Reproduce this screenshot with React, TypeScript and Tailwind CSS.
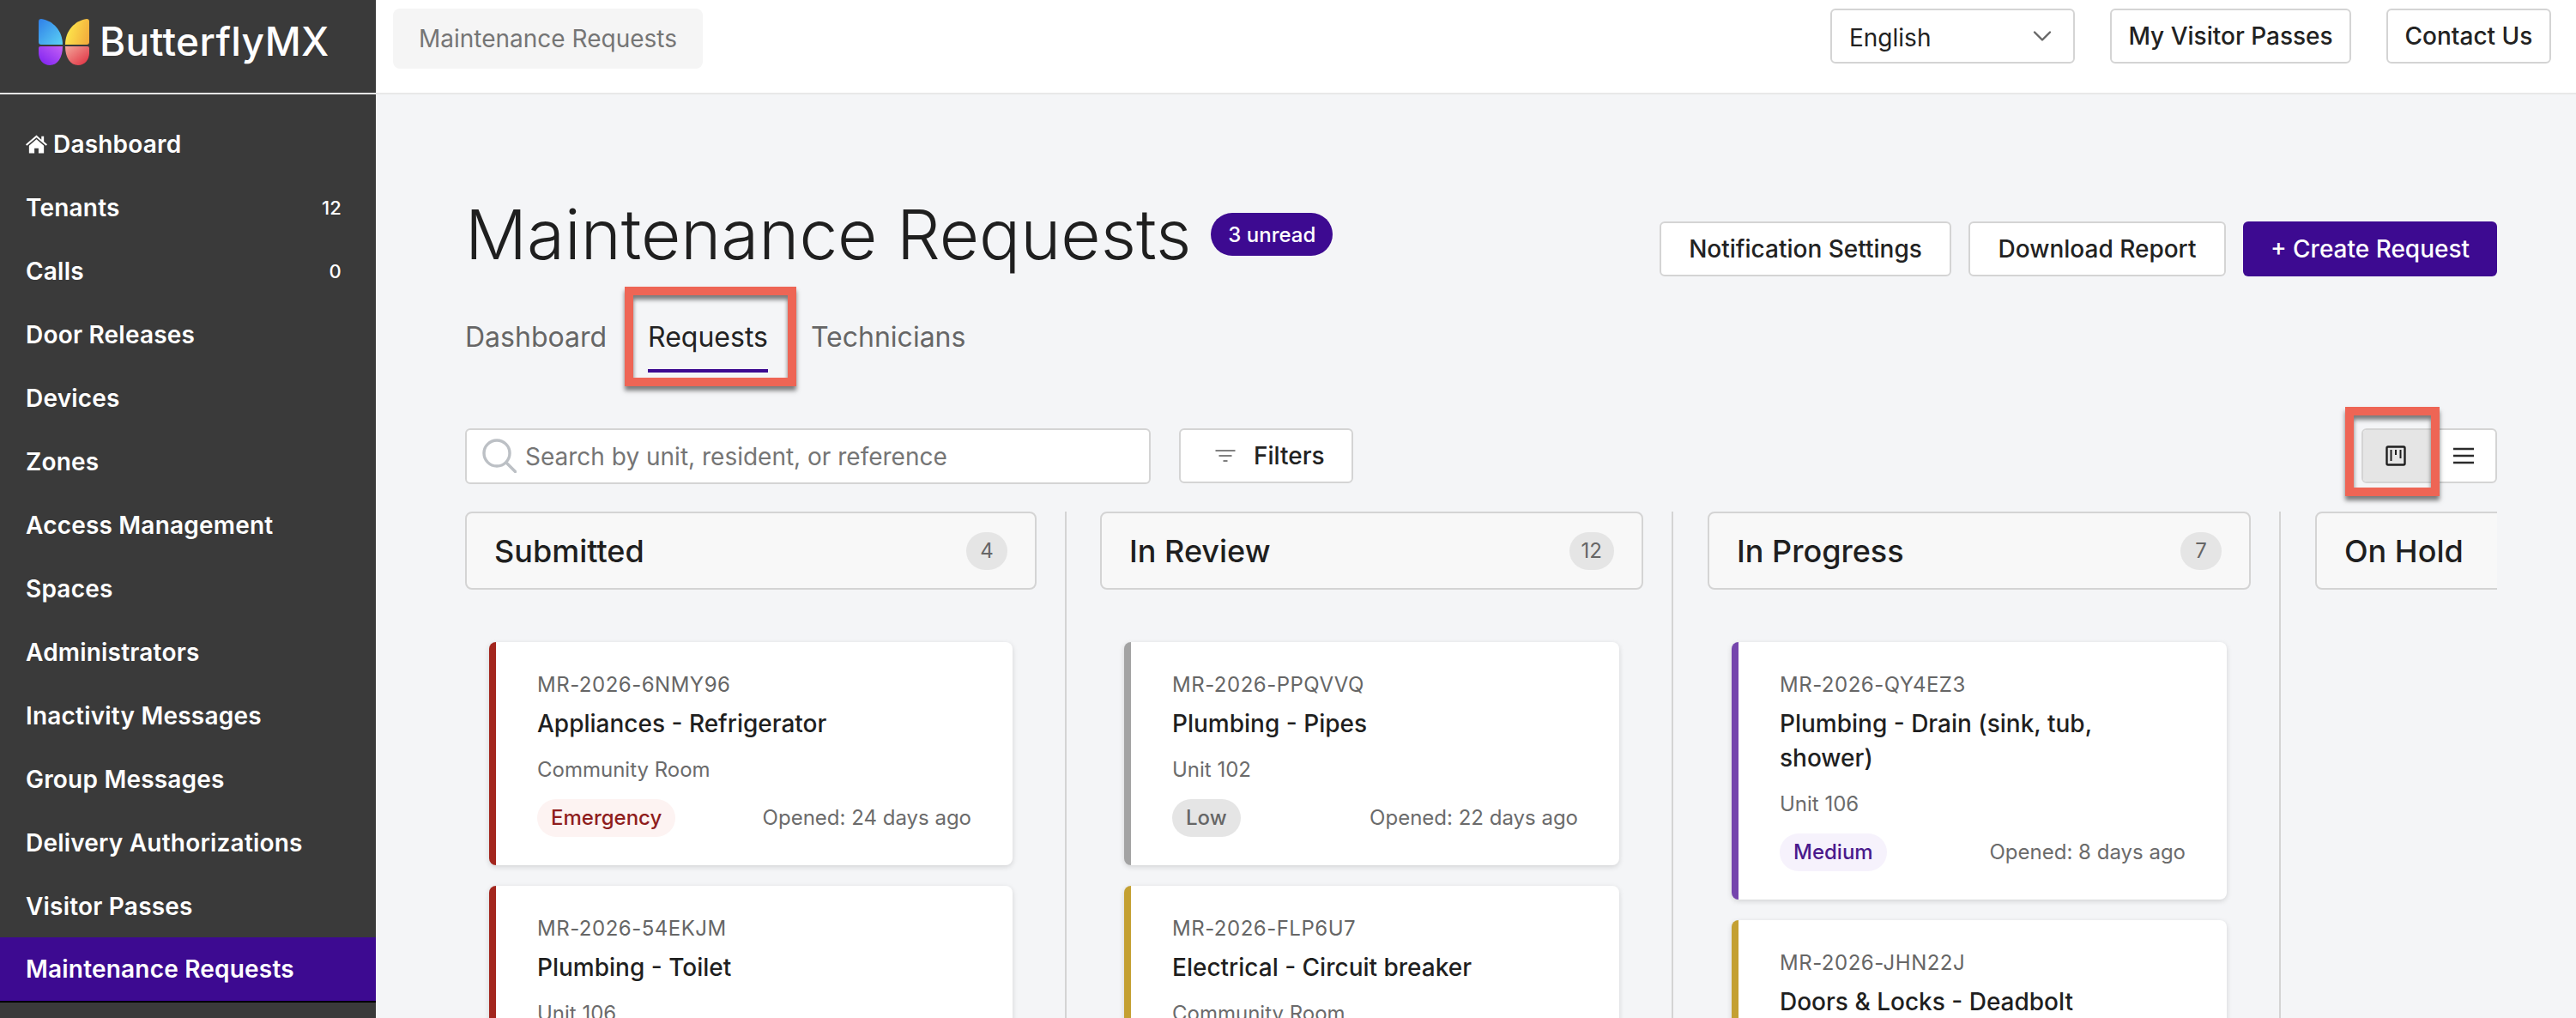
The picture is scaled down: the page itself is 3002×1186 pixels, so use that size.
import React from "react";
import { ChevronDown } from "lucide-react";

const nav: [string, string?][] = [
  ["Tenants", "12"], ["Calls", "0"], ["Door Releases"], ["Devices"], ["Zones"], ["Access Management"], ["Spaces"],
  ["Administrators"], ["Inactivity Messages"], ["Group Messages"], ["Delivery Authorizations"], ["Visitor Passes"],
];

function Logo() {
  return (
    <svg width="59" height="54" viewBox="0 0 59 54" className="shrink-0">
      <defs>
        <linearGradient id="lg1" x1="0" y1="0" x2="1" y2="1"><stop offset="0" stopColor="#2f7fe8" /><stop offset="1" stopColor="#5cd2f5" /></linearGradient>
        <linearGradient id="lg2" x1="0" y1="0.6" x2="1" y2="0.9"><stop offset="0" stopColor="#fde74c" /><stop offset="1" stopColor="#f2a93b" /></linearGradient>
        <linearGradient id="lg3" x1="0" y1="1" x2="1" y2="0"><stop offset="0" stopColor="#7a1ff0" /><stop offset="1" stopColor="#c561f5" /></linearGradient>
        <linearGradient id="lg4" x1="0" y1="0" x2="1" y2="1"><stop offset="0" stopColor="#f3a79a" /><stop offset="1" stopColor="#e02c3f" /></linearGradient>
      </defs>
      <path d="M0 3Q0 0 3 0C17 2 28 14 28 30H3Q0 30 0 27Z" fill="url(#lg1)" />
      <path d="M59 3Q59 0 56 0C42 2 31 14 31 30H56Q59 30 59 27Z" fill="url(#lg2)" />
      <path d="M0 34Q0 32 2 32H28C28 45 22 54 13 54C5 54 0 47 0 40Z" fill="url(#lg3)" />
      <path d="M59 34Q59 32 57 32H31C31 45 37 54 46 54C54 54 59 47 59 40Z" fill="url(#lg4)" />
    </svg>
  );
}

function Home() {
  return (
    <svg width="25" height="22" viewBox="0 0 26 22" className="shrink-0" fill="#fff">
      <path d="M13 0 0 11.2l1.4 1.6L13 2.9l11.6 9.9 1.4-1.6-4-3.4V1.5h-3v4.1z" />
      <path d="M13 5 4 12.7V22h6.5v-6h5v6H22v-9.3z" />
    </svg>
  );
}

function Kanban() {
  return (
    <svg width="24" height="24" viewBox="0 0 24 24" fill="none" stroke="#1f1f1f" strokeWidth="2.4">
      <rect x="1.5" y="1.5" width="21" height="21" rx="1.5" />
      <path d="M6.5 5v13M12 5v6M17.5 5v10" strokeWidth="2" />
    </svg>
  );
}

function FilterIcon() {
  return (
    <svg width="24" height="16" viewBox="0 0 24 16" fill="none" stroke="#808080" strokeWidth="2" className="shrink-0">
      <path d="M0.5 2h23M4.5 8h15M9.5 14h5" />
    </svg>
  );
}

function SearchIcon() {
  return (
    <svg width="40" height="40" viewBox="0 0 40 40" fill="none" stroke="#bcc0c5" strokeWidth="3.4" strokeLinecap="round" className="shrink-0">
      <circle cx="17" cy="17" r="15" />
      <path d="M28 28 38.5 38.5" />
    </svg>
  );
}

function Lines() {
  return (
    <svg width="24" height="20" viewBox="0 0 24 20" fill="none" stroke="#2b2b2b" strokeWidth="2.5">
      <path d="M0 2h24M0 10h24M0 18h24" />
    </svg>
  );
}

function Annot({ className }: { className: string }) {
  return <div className={`pointer-events-none absolute border-[10px] border-[#ee6555] shadow-[0_5px_5px_rgba(0,0,0,0.5),inset_0_5px_5px_rgba(0,0,0,0.5)] ${className}`} />;
}

type C = { id: string; title: string; loc: string; pr: string; opened?: string; bar: string; badge: string };

const Card = ({ c }: { c: C }) => (
  <div className={`shrink-0 rounded-lg border-l-8 bg-white pl-12 pr-12 pt-[34px] pb-[33px] shadow-[0_2px_6px_rgba(0,0,0,0.14)] ${c.bar}`}>
    <div className="text-[24px] leading-[32px] tracking-[0.5px] text-[#666]">{c.id}</div>
    <div className="mt-[9px] text-[28px] leading-[40px] font-medium text-[#1f1f1f]">{c.title}</div>
    <div className="mt-[18px] text-[24px] leading-[32px] text-[#6b6b6b]">{c.loc}</div>
    <div className="mt-[18px] flex items-center justify-between">
      <span className={`h-11 rounded-full px-4 text-[24px] leading-[44px] font-medium ${c.badge}`}>{c.pr}</span>
      {c.opened && <span className="text-[24px] leading-[32px] text-[#6b6b6b]">{c.opened}</span>}
    </div>
  </div>
);

function Column({ title, count, cards, className }: { title: string; count?: string; cards: C[]; className: string }) {
  return (
    <div className={`flex shrink-0 flex-col ${className}`}>
      <div className="flex h-[91px] shrink-0 items-center justify-between rounded-lg border-2 border-[#d4d4d4] bg-[#f8f8f8] pl-8 pr-8">
        <span className="text-[36px] font-medium text-[#1f1f1f]">{title}</span>
        {count && (
          <span className="flex h-11 min-w-12 items-center justify-center rounded-full bg-[#e5e5e5] px-[14px] text-[24px] text-[#666]">{count}</span>
        )}
      </div>
      <div className="mt-[61px] flex shrink-0 flex-col gap-6 px-7">
        {cards.map((c) => <Card key={c.id} c={c} />)}
      </div>
    </div>
  );
}

const red = "border-[#a3261e]";
const gold = "border-[#c4a032]";
const emergency = "bg-[#fdf3f2] text-[#8f1d1d]";

export default function App() {
  return (
    <div className="flex h-[1186px] w-[3002px] overflow-hidden bg-[#f4f5f7] font-['Inter',sans-serif]">
      <aside className="flex w-[438px] shrink-0 flex-col bg-[#3a3a3a] text-white">
        <div className="flex h-[110px] shrink-0 items-start gap-3 border-b-[2px] border-[#e5e5e5] pt-[22px] pl-[45px]">
          <Logo />
          <span className="text-[46px] leading-[52px] font-medium tracking-[0.4px]">ButterflyMX</span>
        </div>
        <nav className="mt-[20px] flex flex-col text-[28px] font-semibold tracking-[0.2px]">
          <a className="flex h-[74px] items-center gap-[7px] pt-[2px] pl-[30px]"><Home /><span>Dashboard</span></a>
          {nav.map(([n, b]) => (
            <a key={n} className="flex h-[74px] items-center justify-between pt-[2px] pl-[30px] pr-10">
              <span>{n}</span>
              {b && <span className="text-[22px] font-medium">{b}</span>}
            </a>
          ))}
          <a className="flex h-[76px] items-center border-b-2 border-black bg-[#3d0a91] pl-[30px]">Maintenance Requests</a>
        </nav>
      </aside>

      <div className="flex min-w-0 flex-1 flex-col">
        <header className="flex h-[110px] shrink-0 items-start justify-between border-b-2 border-[#e8e8e8] bg-white pl-5 pr-[29px] pt-[10px]">
          <div className="flex h-[70px] items-center rounded-lg bg-[#f5f5f5] px-[30px] text-[28px] text-[#757575]">Maintenance Requests</div>
          <div className="flex gap-[41px] text-[28px] text-[#222]">
            <div className="flex h-[64px] w-[285px] items-center justify-between rounded-md border-2 border-[#d4d4d4] pl-[20px] pr-[18px]">
              <span className="pt-[4px]">English</span><ChevronDown size={36} strokeWidth={1.6} color="#666" />
            </div>
            <div className="flex h-[64px] w-[281px] items-center justify-center rounded-md border-2 border-[#d4d4d4] font-medium">My Visitor Passes</div>
            <div className="flex h-[64px] w-[192px] items-center justify-center rounded-md border-2 border-[#d4d4d4] font-medium">Contact Us</div>
          </div>
        </header>

        <main className="relative flex min-h-0 flex-1 flex-col pl-[104px] pr-[92px]">
          <div className="mt-[113px] flex h-[100px] shrink-0 items-start justify-between">
            <div className="flex items-center gap-[23px]">
              <h1 className="text-[80px] leading-[100px] font-light text-[#1f1f1f]">Maintenance Requests</h1>
              <span className="flex h-[50px] items-center rounded-full bg-[#3d0a91] px-5 pt-[2px] text-[24px] font-medium text-white">3 unread</span>
            </div>
            <div className="mt-[35px] flex gap-5 text-[28px] font-medium">
              <button className="h-[64px] w-[340px] rounded-md border-2 border-[#d4d4d4] bg-white text-[#222]">Notification Settings</button>
              <button className="h-[64px] w-[300px] rounded-md border-2 border-[#d4d4d4] bg-white text-[#222]">Download Report</button>
              <button className="h-[64px] w-[296px] rounded-md bg-[#3d0a91] text-white">+ Create Request</button>
            </div>
          </div>

          <div className="mt-[42px] flex h-[69px] shrink-0 gap-[48px] text-[32px] text-[#666]">
            <div className="pt-[4px] leading-[48px]">Dashboard</div>
            <div className="h-[69px] border-b-4 border-[#3d0a91] pt-[4px] leading-[48px] text-[#222]">Requests</div>
            <div className="ml-[2px] pt-[4px] leading-[48px]">Technicians</div>
          </div>

          <div className="mt-[65px] flex h-[64px] shrink-0 items-center">
            <div className="flex h-[65px] w-[799px] items-center gap-[10px] rounded-md border-2 border-[#d4d4d4] bg-white pl-[18px] text-[28px] text-[#757575]">
              <SearchIcon />
              <span className="pt-[2px]">Search by unit, resident, or reference</span>
            </div>
            <button className="ml-[33px] flex h-[64px] w-[203px] items-center gap-[21px] rounded-md border-2 border-[#d4d4d4] bg-white pl-[40px] text-[28px] font-medium text-[#222]">
              <FilterIcon />Filters
            </button>
            <div className="ml-auto flex h-[64px] w-[158px] overflow-hidden rounded-md border-2 border-[#d4d4d4] bg-white">
              <div className="flex w-[80px] items-center justify-center bg-[#e5e5e5] pr-[4px]"><Kanban /></div>
              <div className="flex flex-1 items-center justify-center"><Lines /></div>
            </div>
          </div>

          <div className="mt-[33px] flex min-h-0 flex-1 overflow-hidden">
            <Column className="w-[666px]" title="Submitted" count="4" cards={[
              { id: "MR-2026-6NMY96", title: "Appliances - Refrigerator", loc: "Community Room", pr: "Emergency", opened: "Opened: 24 days ago", bar: red, badge: emergency },
              { id: "MR-2026-54EKJM", title: "Plumbing - Toilet", loc: "Unit 106", pr: "Emergency", bar: red, badge: emergency },
            ]} />
            <div className="ml-[33px] mr-[39px] w-[2px] shrink-0 bg-[#d4d4d4]" />
            <Column className="w-[633px]" title="In Review" count="12" cards={[
              { id: "MR-2026-PPQVVQ", title: "Plumbing - Pipes", loc: "Unit 102", pr: "Low", opened: "Opened: 22 days ago", bar: "border-[#a3a3a3]", badge: "bg-[#e5e5e5] text-[#666]" },
              { id: "MR-2026-FLP6U7", title: "Electrical - Circuit breaker", loc: "Community Room", pr: "Low", bar: gold, badge: "bg-[#e5e5e5] text-[#666]" },
            ]} />
            <div className="ml-[33px] mr-[40px] w-[2px] shrink-0 bg-[#d4d4d4]" />
            <Column className="w-[633px]" title="In Progress" count="7" cards={[
              { id: "MR-2026-QY4EZ3", title: "Plumbing - Drain (sink, tub, shower)", loc: "Unit 106", pr: "Medium", opened: "Opened: 8 days ago", bar: "border-[#7545ad]", badge: "bg-[#f6f2fc] text-[#4a1a8c]" },
              { id: "MR-2026-JHN22J", title: "Doors & Locks - Deadbolt", loc: "Unit 106", pr: "Medium", bar: gold, badge: "bg-[#f6f2fc] text-[#4a1a8c]" },
            ]} />
            <div className="ml-[33px] mr-[40px] w-[2px] shrink-0 bg-[#d4d4d4]" />
            <Column className="w-[633px]" title="On Hold" cards={[]} />
          </div>

          <Annot className="left-[290px] top-[224px] h-[116px] w-[200px]" />
          <Annot className="left-[2295px] top-[364px] h-[104px] w-[110px]" />
        </main>
      </div>
    </div>
  );
}
